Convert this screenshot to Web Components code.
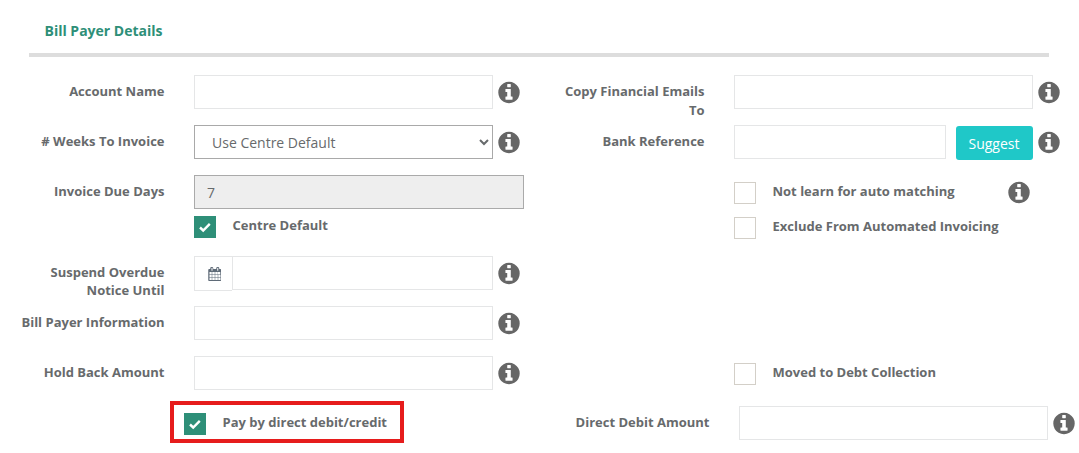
<!DOCTYPE html>
<html>
<head>
<meta charset="utf-8">
<title>Bill Payer Details</title>
<style>
    html, body { margin: 0; padding: 0; background: #fff; }
    body { font-family: "Open Sans", "Liberation Sans", sans-serif; font-size: 13px; color: #676a6c; }
    .checks { padding-left: 194px; }
</style>
</head>
<body>
<bp-panel heading="Bill Payer Details">
    <bp-row>
        <bp-field slot="left" label="Account Name" info><bp-input></bp-input></bp-field>
        <bp-field slot="right" label="Copy Financial Emails To" info><bp-input></bp-input></bp-field>
    </bp-row>
    <bp-row>
        <bp-field slot="left" label="# Weeks To Invoice" info><bp-select value="Use Centre Default"></bp-select></bp-field>
        <bp-field slot="right" label="Bank Reference" info><bp-input width="212"></bp-input><bp-button>Suggest</bp-button></bp-field>
    </bp-row>
    <bp-row tall>
        <div slot="left">
            <bp-field label="Invoice Due Days"><bp-input width="330" value="7" disabled></bp-input></bp-field>
            <div class="checks"><bp-check checked gap="7">Centre Default</bp-check></div>
        </div>
        <div slot="right" class="checks">
            <bp-check gap="7" info>Not learn for auto matching</bp-check>
            <bp-check gap="13">Exclude From Automated Invoicing</bp-check>
        </div>
    </bp-row>
    <bp-row>
        <bp-field slot="left" label="Suspend Overdue Notice Until" lines="18" info><bp-date></bp-date></bp-field>
    </bp-row>
    <bp-row>
        <bp-field slot="left" label="Bill Payer Information" info><bp-input></bp-input></bp-field>
    </bp-row>
    <bp-row>
        <bp-field slot="left" label="Hold Back Amount" info><bp-input></bp-input></bp-field>
        <div slot="right" class="checks"><bp-check gap="7">Moved to Debt Collection</bp-check></div>
    </bp-row>
    <bp-row>
        <bp-highlight slot="left"><bp-check checked>Pay by direct debit/credit</bp-check></bp-highlight>
        <bp-field slot="right" label="Direct Debit Amount" info shift="5"><bp-input width="309"></bp-input></bp-field>
    </bp-row>
</bp-panel>

<script>
const INFO_PATH = 'M1024 1376v-160q0-14-9-23t-23-9h-96v-512q0-14-9-23t-23-9h-320q-14 0-23 9t-9 23v160q0 14 9 23t23 9h96v320h-96q-14 0-23 9t-9 23v160q0 14 9 23t23 9h448q14 0 23-9t9-23zm-128-896v-160q0-14-9-23t-23-9h-192q-14 0-23 9t-9 23v160q0 14 9 23t23 9h192q14 0 23-9t9-23zm640 416q0 209-103 385.5t-279.5 279.5-385.5 103-385.5-103-279.5-279.5-103-385.5 103-385.5 279.5-279.5 385.5-103 385.5 103 279.5 279.5 103 385.5z';
const CAL_PATH = 'M192 1664h288v-288h-288v288zm352 0h320v-288h-320v288zm-352-352h288v-320h-288v320zm352 0h320v-320h-320v320zm-352-384h288v-288h-288v288zm736 736h320v-288h-320v288zm-384-736h320v-288h-320v288zm768 736h288v-288h-288v288zm-384-352h320v-320h-320v320zm-352-864v-288q0-13-9.5-22.5t-22.5-9.5h-64q-13 0-22.5 9.5t-9.5 22.5v288q0 13 9.5 22.5t22.5 9.5h64q13 0 22.5-9.5t9.5-22.5zm736 864h288v-320h-288v320zm-384-384h320v-288h-320v288zm352 0h288v-288h-288v288zm32-480v-288q0-13-9.5-22.5t-22.5-9.5h-64q-13 0-22.5 9.5t-9.5 22.5v288q0 13 9.5 22.5t22.5 9.5h64q13 0 22.5-9.5t9.5-22.5zm384-64v1280q0 52-38 90t-90 38h-1408q-52 0-90-38t-38-90v-1280q0-52 38-90t90-38h128v-96q0-66 47-113t113-47h64q66 0 113 47t47 113v96h384v-96q0-66 47-113t113-47h64q66 0 113 47t47 113v96h128q52 0 90 38t38 90z';

class BpInfo extends HTMLElement {
    constructor() {
        super();
        this.attachShadow({ mode: 'open' });
        this.shadowRoot.innerHTML = `
            <style>
                :host { display: block; width: 22px; height: 25px; flex: none; }
                svg { display: block; width: 22px; height: 25px; fill: #666; }
            </style>
            <svg viewBox="0 0 1536 1792"><path d="${INFO_PATH}"/></svg>
        `;
    }
}

class BpPanel extends HTMLElement {
    constructor() {
        super();
        this.attachShadow({ mode: 'open' });
    }

    connectedCallback() {
        const heading = this.getAttribute('heading') || '';
        this.shadowRoot.innerHTML = `
            <style>
                :host { display: block; }
                h2 {
                    box-sizing: border-box;
                    width: 1020px;
                    height: 57px;
                    margin: 0 29px;
                    padding-left: 15.5px;
                    border-bottom: 4px solid #ddd;
                    line-height: 62px;
                    font-size: 14px;
                    font-weight: 700;
                    color: #2e8f78;
                }
                .body { padding-top: 18px; }
            </style>
            <h2>${heading}</h2>
            <div class="body"><slot></slot></div>
        `;
    }
}

class BpRow extends HTMLElement {
    constructor() {
        super();
        this.attachShadow({ mode: 'open' });
        this.shadowRoot.innerHTML = `
            <style>
                :host { display: grid; grid-template-columns: 540px 539px; height: 50px; }
                :host([tall]) { height: 81px; }
                ::slotted([slot="right"]) { --info-gap: 4.5px; }
            </style>
            <slot name="left"></slot>
            <slot name="right"></slot>
        `;
    }
}

class BpField extends HTMLElement {
    constructor() {
        super();
        this.attachShadow({ mode: 'open' });
    }

    connectedCallback() {
        const label = this.getAttribute('label') || '';
        const shift = Number(this.getAttribute('shift') || 0);
        const lines = this.getAttribute('lines') || 19;
        const info = this.hasAttribute('info') ? '<bp-info></bp-info>' : '';
        this.shadowRoot.innerHTML = `
            <style>
                :host { display: flex; align-items: flex-start; }
                label {
                    flex: none;
                    box-sizing: border-box;
                    width: ${164.5 + shift}px;
                    margin-right: 29.5px;
                    padding: 7px 0 0 ${15 + shift}px;
                    text-align: right;
                    font-weight: 700;
                    font-size: 13px;
                    line-height: ${lines}px;
                    color: #676a6c;
                }
                .controls { display: flex; gap: 10px; }
                bp-info { margin: 5px 0 0 var(--info-gap, 5px); }
            </style>
            <label>${label}</label>
            <div class="controls"><slot></slot></div>
            ${info}
        `;
    }
}

class BpInput extends HTMLElement {
    constructor() {
        super();
        this.attachShadow({ mode: 'open' });
    }

    connectedCallback() {
        const width = this.getAttribute('width') || 299;
        const value = this.getAttribute('value') || '';
        const disabled = this.hasAttribute('disabled');
        this.shadowRoot.innerHTML = `
            <style>
                :host { display: block; }
                input {
                    display: block;
                    box-sizing: border-box;
                    width: ${width}px;
                    height: 34px;
                    margin: 0;
                    padding: 0 12px;
                    border: 1px solid #e5e6e7;
                    border-radius: 0;
                    background: #fff;
                    font: 14px "Open Sans", "Liberation Sans", sans-serif;
                    color: #676a6c;
                    outline: none;
                }
                input:disabled { background: #eee; border-color: #aaa; color: #676a6c; opacity: 1; }
            </style>
            <input type="text" value="${value}" ${disabled ? 'disabled' : ''}>
        `;
    }
}

class BpSelect extends HTMLElement {
    constructor() {
        super();
        this.attachShadow({ mode: 'open' });
    }

    connectedCallback() {
        const value = this.getAttribute('value') || '';
        this.shadowRoot.innerHTML = `
            <style>
                :host { display: block; }
                select {
                    display: block;
                    box-sizing: border-box;
                    width: 299px;
                    height: 34px;
                    margin: 0;
                    padding: 0 12px 0 13px;
                    border: 1px solid #a9a9a9;
                    border-radius: 0;
                    background: #fff;
                    font: 14px "Open Sans", "Liberation Sans", sans-serif;
                    color: #676a6c;
                    outline: none;
                }
            </style>
            <select><option>${value}</option></select>
        `;
    }
}

class BpButton extends HTMLElement {
    constructor() {
        super();
        this.attachShadow({ mode: 'open' });
        this.shadowRoot.innerHTML = `
            <style>
                :host { display: block; margin-top: 1px; }
                button {
                    display: block;
                    width: 77px;
                    height: 34px;
                    padding: 0 1px 0 0;
                    border: 0;
                    border-radius: 3px;
                    background: #1fc8c8;
                    color: #fff;
                    font: 14px "Open Sans", "Liberation Sans", sans-serif;
                }
            </style>
            <button><slot></slot></button>
        `;
    }
}

class BpDate extends HTMLElement {
    constructor() {
        super();
        this.attachShadow({ mode: 'open' });
        this.shadowRoot.innerHTML = `
            <style>
                :host { display: flex; width: 299px; height: 34px; }
                .addon {
                    flex: none;
                    box-sizing: border-box;
                    width: 38px;
                    height: 35px;
                    padding-left: 1px;
                    display: flex;
                    align-items: center;
                    justify-content: center;
                    border: 1px solid #e5e6e7;
                    border-right: 0;
                }
                svg { width: 13px; height: 14px; fill: #5f6b78; }
                input {
                    flex: 1;
                    min-width: 0;
                    box-sizing: border-box;
                    height: 34px;
                    margin: 0;
                    border: 1px solid #e5e6e7;
                    outline: none;
                }
            </style>
            <div class="addon"><svg viewBox="0 0 1664 1792"><path d="${CAL_PATH}"/></svg></div>
            <input type="text">
        `;
    }
}

class BpCheck extends HTMLElement {
    constructor() {
        super();
        this.attachShadow({ mode: 'open' });
    }

    connectedCallback() {
        const checked = this.hasAttribute('checked');
        const gap = this.getAttribute('gap') || 0;
        const info = this.hasAttribute('info') ? '<bp-info></bp-info>' : '';
        const tick = checked ? '<svg viewBox="0 0 22 22"><path d="M6 11.5l3.2 3 6.6-6.6" fill="none" stroke="#fff" stroke-width="2.4"/></svg>' : '';
        this.shadowRoot.innerHTML = `
            <style>
                :host {
                    display: flex;
                    align-items: center;
                    margin-top: ${gap}px;
                    height: 22px;
                }
                .box {
                    flex: none;
                    box-sizing: border-box;
                    width: 22px;
                    height: 22px;
                    border: 1px solid #d3cfc8;
                    background: #fff;
                }
                .box.on { border: 0; background: #2e8f78; }
                svg { display: block; width: 22px; height: 22px; }
                span {
                    margin: 0 0 3px 16.5px;
                    font-weight: 700;
                    font-size: 13px;
                    line-height: 19px;
                    color: #676a6c;
                }
                bp-info { margin: 0 0 2px 53.5px; }
            </style>
            <div class="box ${checked ? 'on' : ''}">${tick}</div>
            <span><slot></slot></span>
            ${info}
        `;
    }
}

class BpHighlight extends HTMLElement {
    constructor() {
        super();
        this.attachShadow({ mode: 'open' });
        this.shadowRoot.innerHTML = `
            <style>
                :host {
                    display: block;
                    box-sizing: border-box;
                    width: 234px;
                    height: 42px;
                    margin: -5px 0 0 170px;
                    padding: 8px 10px;
                    border: 4px solid #e61c1c;
                }
            </style>
            <slot></slot>
        `;
    }
}

customElements.define('bp-info', BpInfo);
customElements.define('bp-panel', BpPanel);
customElements.define('bp-row', BpRow);
customElements.define('bp-field', BpField);
customElements.define('bp-input', BpInput);
customElements.define('bp-select', BpSelect);
customElements.define('bp-button', BpButton);
customElements.define('bp-date', BpDate);
customElements.define('bp-check', BpCheck);
customElements.define('bp-highlight', BpHighlight);
</script>
</body>
</html>
